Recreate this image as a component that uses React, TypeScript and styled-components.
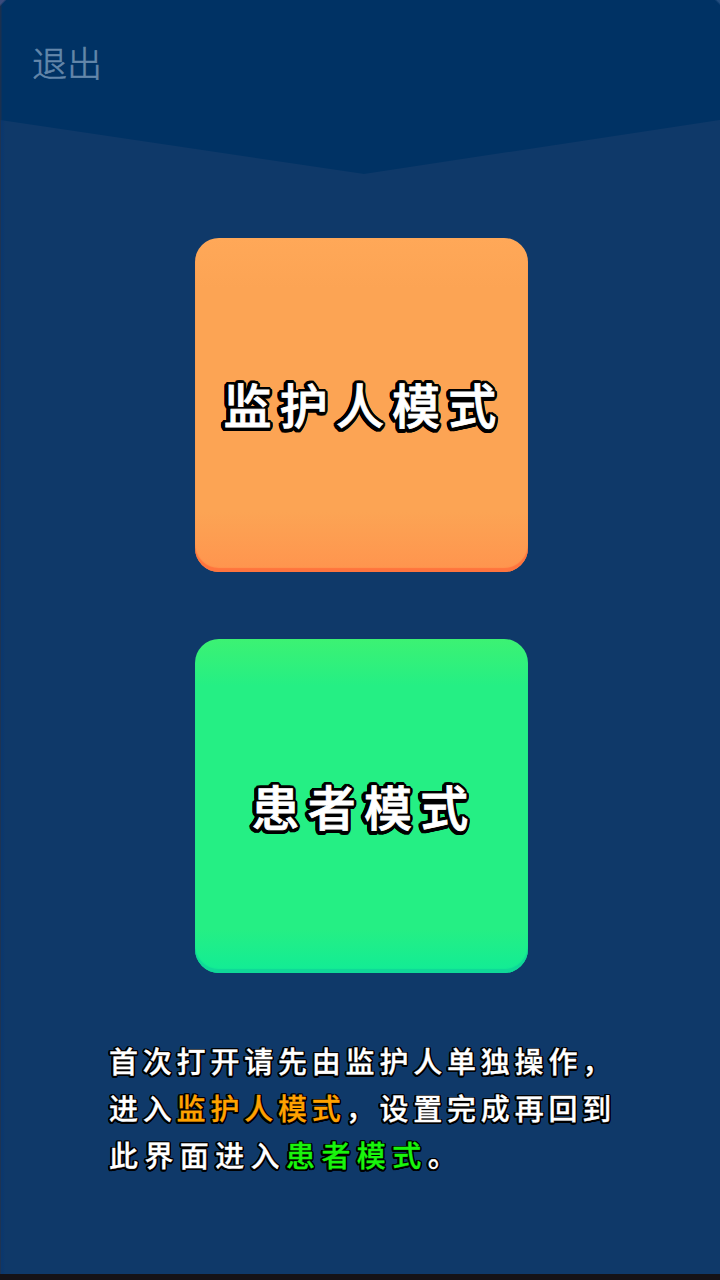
import React from 'react';
import styled, { createGlobalStyle } from 'styled-components';

const outline = (radius: number, dx = 0, dy = 0) =>
  Array.from({ length: 24 }, (_, i) => {
    const angle = (i * Math.PI) / 12;
    return `${(Math.cos(angle) * radius + dx).toFixed(2)}px ${(Math.sin(angle) * radius + dy).toFixed(2)}px 0.6px #000`;
  }).join(', ');

const GlobalStyle = createGlobalStyle`
  * { box-sizing: border-box; }
  body { margin: 0; background: #151216; font-family: "Noto Sans CJK SC", sans-serif; }
`;

const Screen = styled.main`
  display: flex;
  flex-direction: column;
  align-items: center;
  width: 720px;
  height: 1274px;
  background: linear-gradient(90deg, #1d3353 1px, #0b376c 1px, #0b376c 3px, #0f3969 5px);
  overflow: hidden;
`;

const Header = styled.header`
  width: 100%;
  height: 174px;
  flex: none;
  padding: 36px 32px;
  background:
    linear-gradient(135deg, #3b4c7d 3px, transparent 5px),
    linear-gradient(225deg, #234d7e 2px, transparent 4px),
    linear-gradient(90deg, #1a304f 1px, #003264 2px);
  clip-path: polygon(0 0, 100% 0, 100% 120px, 364px 100%, 0 120px);
`;

const ExitButton = styled.button`
  padding: 0;
  border: 0;
  background: none;
  color: #6487aa;
  font: 300 35px/52px "Noto Sans CJK SC", sans-serif;
  -webkit-text-stroke: 0.6px #6487aa;
`;

const Modes = styled.nav`
  display: flex;
  flex-direction: column;
  gap: 67px;
  margin-top: 64px;
  padding-left: 3px;
`;

const ModeButton = styled.button<{ $kind: 'guardian' | 'patient' }>`
  width: 333px;
  height: 334px;
  padding: 0 0 ${({ $kind }) => ($kind === 'guardian' ? 4 : 2)}px 5px;
  border: 0;
  border-radius: 24px;
  color: #fff;
  font: 500 48px/72px "Noto Sans CJK SC", sans-serif;
  letter-spacing: 8.2px;
  white-space: nowrap;
  -webkit-text-stroke: 0.8px #fff;
  text-shadow: ${outline(3.7, -0.8, 0.4)};
  background: ${({ $kind }) => $kind === 'guardian'
    ? 'linear-gradient(#ffa858, #fca454 15%, #fca454 82%, #ff944e)'
    : 'linear-gradient(#3cf273, #25ef84 14%, #25ef84 87%, #11ec96)'};
  box-shadow: inset 0 -4px 1px ${({ $kind }) => $kind === 'guardian' ? '#ff743e' : '#10d898'};
`;

const Notice = styled.p`
  align-self: flex-start;
  margin: 64px 0 0 109px;
  color: #fff;
  font: 500 29px/47px "Noto Sans CJK SC", sans-serif;
  letter-spacing: 4.8px;
  white-space: nowrap;
  -webkit-text-stroke: 0.3px currentColor;
  text-shadow: ${outline(1.7, -0.2, 0.3)};
`;

const LastLine = styled.span`
  letter-spacing: 6.4px;
`;

const Highlight = styled.span<{ $color: string }>`
  color: ${({ $color }) => $color};
  -webkit-text-stroke-color: ${({ $color }) => $color};
`;

export default function App() {
  return (
    <>
      <GlobalStyle />
      <Screen>
        <Header><ExitButton>退出</ExitButton></Header>
        <Modes>
          <ModeButton $kind="guardian">监护人模式</ModeButton>
          <ModeButton $kind="patient">患者模式</ModeButton>
        </Modes>
        <Notice>
          首次打开请先由监护人单独操作，<br />
          进入<Highlight $color="#ffa200">监护人模式</Highlight>，设置完成再回到<br />
          <LastLine>此界面进入<Highlight $color="#19f50c">患者模式</Highlight>。</LastLine>
        </Notice>
      </Screen>
    </>
  );
}
